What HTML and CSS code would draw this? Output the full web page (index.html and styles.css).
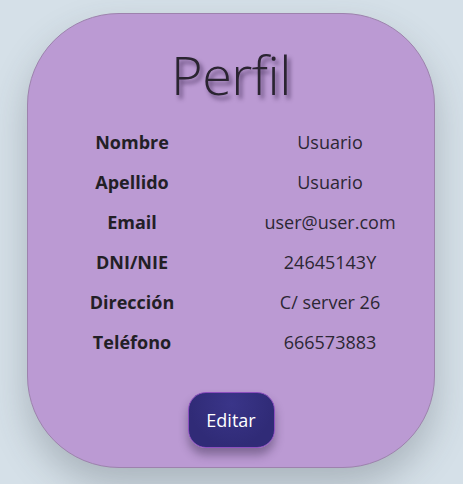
FILE: index.html
```html
<!DOCTYPE html>
<html lang="es">
<head>
<meta charset="utf-8">
<title>Perfil</title>
<link rel="stylesheet" href="styles.css">
</head>
<body>
<main class="card">
  <h1 class="title">Perfil</h1>
  <div class="info">
    <div class="label">Nombre</div><div class="value">Usuario</div>
    <div class="label">Apellido</div><div class="value">Usuario</div>
    <div class="label">Email</div><div class="value">user@user.com</div>
    <div class="label">DNI/NIE</div><div class="value">24645143Y</div>
    <div class="label">Dirección</div><div class="value">C/ server 26</div>
    <div class="label">Teléfono</div><div class="value">666573883</div>
  </div>
  <div class="actions">
    <button class="btn" type="button">Editar</button>
  </div>
</main>
</body>
</html>
```
FILE: styles.css
```css
html, body {
  margin: 0;
  padding: 0;
}
body {
  background: #d5e0e8;
  font-family: "Open Sans", "Noto Sans", sans-serif;
  color: #212529;
  padding-top: 13px;
  height: 484px;
  box-sizing: border-box;
  overflow: hidden;
}
.card {
  width: 408px;
  margin: 0 0 0 27px;
  box-sizing: border-box;
  background: #bb9ad3;
  border: 1px solid #9d82ad;
  border-radius: 92px;
  padding: 24px 0 19px;
  box-shadow: 0 18px 36px rgba(60, 70, 80, 0.28);
}
.title {
  margin: 0;
  text-align: center;
  font-weight: 300;
  font-size: 54px;
  line-height: 72px;
  letter-spacing: -0.5px;
  color: #2a2431;
  text-shadow: 3px 4px 4px rgba(40, 20, 60, 0.6);
}
.info {
  width: 396px;
  margin: 12px auto 0;
  display: grid;
  grid-template-columns: 1fr 1fr;
  grid-auto-rows: 40px;
  align-items: center;
  text-align: center;
  font-size: 18px;
}
.label {
  font-weight: 700;
  color: #231f26;
}
.value {
  font-weight: 400;
  color: #2c2734;
}
.actions {
  margin-top: 30px;
  display: flex;
  justify-content: center;
}
.btn {
  width: 87px;
  height: 56px;
  border-radius: 18px;
  border: 1px solid #8d4fbf;
  background: radial-gradient(ellipse at 50% 20%, #3a3589 0%, #302b77 70%);
  color: #ffffff;
  font-family: "Open Sans", "Noto Sans", sans-serif;
  font-size: 18px;
  padding: 0;
  box-shadow: 0 7px 10px rgba(40, 30, 60, 0.4);
}
```
